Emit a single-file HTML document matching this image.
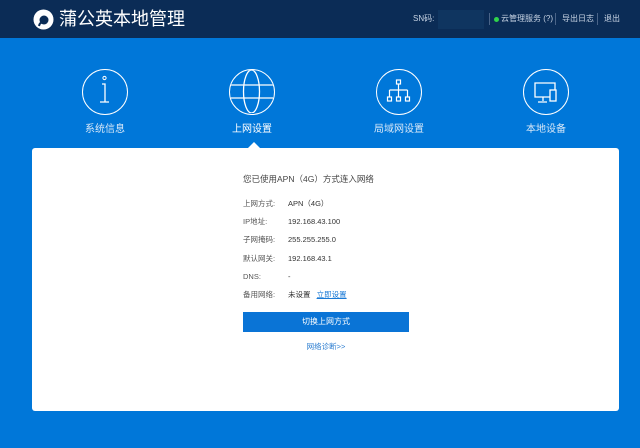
<!DOCTYPE html>
<html><head><meta charset="utf-8"><style>
*{margin:0;padding:0;box-sizing:border-box}
body{width:640px;height:448px;overflow:hidden;background:#0077d9;font-family:"Liberation Sans","Noto Sans CJK SC",sans-serif;position:relative}
.hd{position:absolute;left:0;top:0;width:640px;height:38px;background:#0b2c56}
.t{position:absolute;left:59px;top:7px;color:#fff;font-size:18px;line-height:24px}
.r{position:absolute;top:13px;font-size:8px;color:#c8d4e4;line-height:12px}
.sep{position:absolute;top:13px;width:1px;height:12px;background:#4a6488}
.ic{position:absolute;top:69px;width:46px;height:46px;border:1.5px solid #fff;border-radius:50%}
.lb{position:absolute;top:120px;width:100px;text-align:center;color:#d8e8f8;font-size:10px}
.card{position:absolute;left:32px;top:148px;width:587px;height:263px;background:#fff;border-radius:3px}
.row{position:absolute;left:243px;font-size:7.5px;color:#555;line-height:10px}
.row span{position:absolute;left:45px;white-space:nowrap;color:#333}
</style></head><body>
<div class="hd">
<svg style="position:absolute;left:33px;top:9px" width="21" height="21" viewBox="0 0 21 21"><circle cx="10.5" cy="10.5" r="10" fill="#fff"/><circle cx="11" cy="11" r="4.5" fill="#0b2c56"/><path d="M6 17 Q7 13 9 14" stroke="#0b2c56" stroke-width="2" fill="none"/></svg>
<div class="t">蒲公英本地管理</div>
<div class="r" style="left:413px">SN码:</div>
<div style="position:absolute;left:438px;top:10px;width:46px;height:19px;background:#0f3560"></div>
<div class="sep" style="left:489px"></div>
<div style="position:absolute;left:494px;top:17px;width:5px;height:5px;border-radius:50%;background:#2fd34a"></div>
<div class="r" style="left:501px">云管理服务 (?)</div>
<div class="sep" style="left:555px"></div>
<div class="r" style="left:562px">导出日志</div>
<div class="sep" style="left:597px"></div>
<div class="r" style="left:604px">退出</div>
</div>
<div class="ic" style="left:82px"><svg width="43" height="43" viewBox="0 0 43 43"><circle cx="21.5" cy="8" r="1.6" fill="none" stroke="#fff"/><path d="M19 14H22V32M17 32H26" stroke="#fff" stroke-width="1.3" fill="none"/></svg></div>
<div class="ic" style="left:229px;overflow:hidden"><svg width="43" height="43" viewBox="0 0 43 43"><ellipse cx="21.5" cy="21.5" rx="8" ry="21.5" fill="none" stroke="#fff" stroke-width="1.3"/><path d="M0 15H43M0 28H43" stroke="#fff" stroke-width="1.3"/></svg></div>
<div class="ic" style="left:376px"><svg width="43" height="43" viewBox="0 0 43 43" fill="none" stroke="#fff" stroke-width="1.2"><rect x="19.5" y="10" width="4" height="4"/><path d="M21.5 14V20M12.5 20H30.5M12.5 20V27M21.5 20V27M30.5 20V27"/><rect x="10.5" y="27" width="4" height="4"/><rect x="19.5" y="27" width="4" height="4"/><rect x="28.5" y="27" width="4" height="4"/></svg></div>
<div class="ic" style="left:523px"><svg width="43" height="43" viewBox="0 0 43 43" fill="none" stroke="#fff" stroke-width="1.3"><path d="M26 27H11V13H31V20"/><path d="M19 27V31M14 32H23"/><rect x="26" y="20" width="6" height="11"/></svg></div>
<div class="lb" style="left:55px">系统信息</div>
<div class="lb" style="left:202px;color:#fff">上网设置</div>
<div class="lb" style="left:349px">局域网设置</div>
<div class="lb" style="left:496px">本地设备</div>
<div style="position:absolute;left:248px;top:142px;width:0;height:0;border-left:6px solid transparent;border-right:6px solid transparent;border-bottom:6px solid #fff"></div>
<div class="card"></div>
<div class="row" style="top:174px;font-size:8.5px;color:#444">您已使用APN（4G）方式连入网络</div>
<div class="row" style="top:199px">上网方式:<span>APN（4G）</span></div>
<div class="row" style="top:217px">IP地址:<span>192.168.43.100</span></div>
<div class="row" style="top:235px">子网掩码:<span>255.255.255.0</span></div>
<div class="row" style="top:254px">默认网关:<span>192.168.43.1</span></div>
<div class="row" style="top:272px">DNS:<span>-</span></div>
<div class="row" style="top:290px">备用网络:<span>未设置 <u style="color:#1a7ad6;margin-left:4px">立即设置</u></span></div>
<div style="position:absolute;left:243px;top:312px;width:166px;height:20px;background:#0a74d6;color:#fff;font-size:8px;text-align:center;line-height:20px">切换上网方式</div>
<div style="position:absolute;left:243px;top:341px;width:166px;text-align:center;color:#2a7cd0;font-size:7.5px">网络诊断&gt;&gt;</div>
</body></html>
